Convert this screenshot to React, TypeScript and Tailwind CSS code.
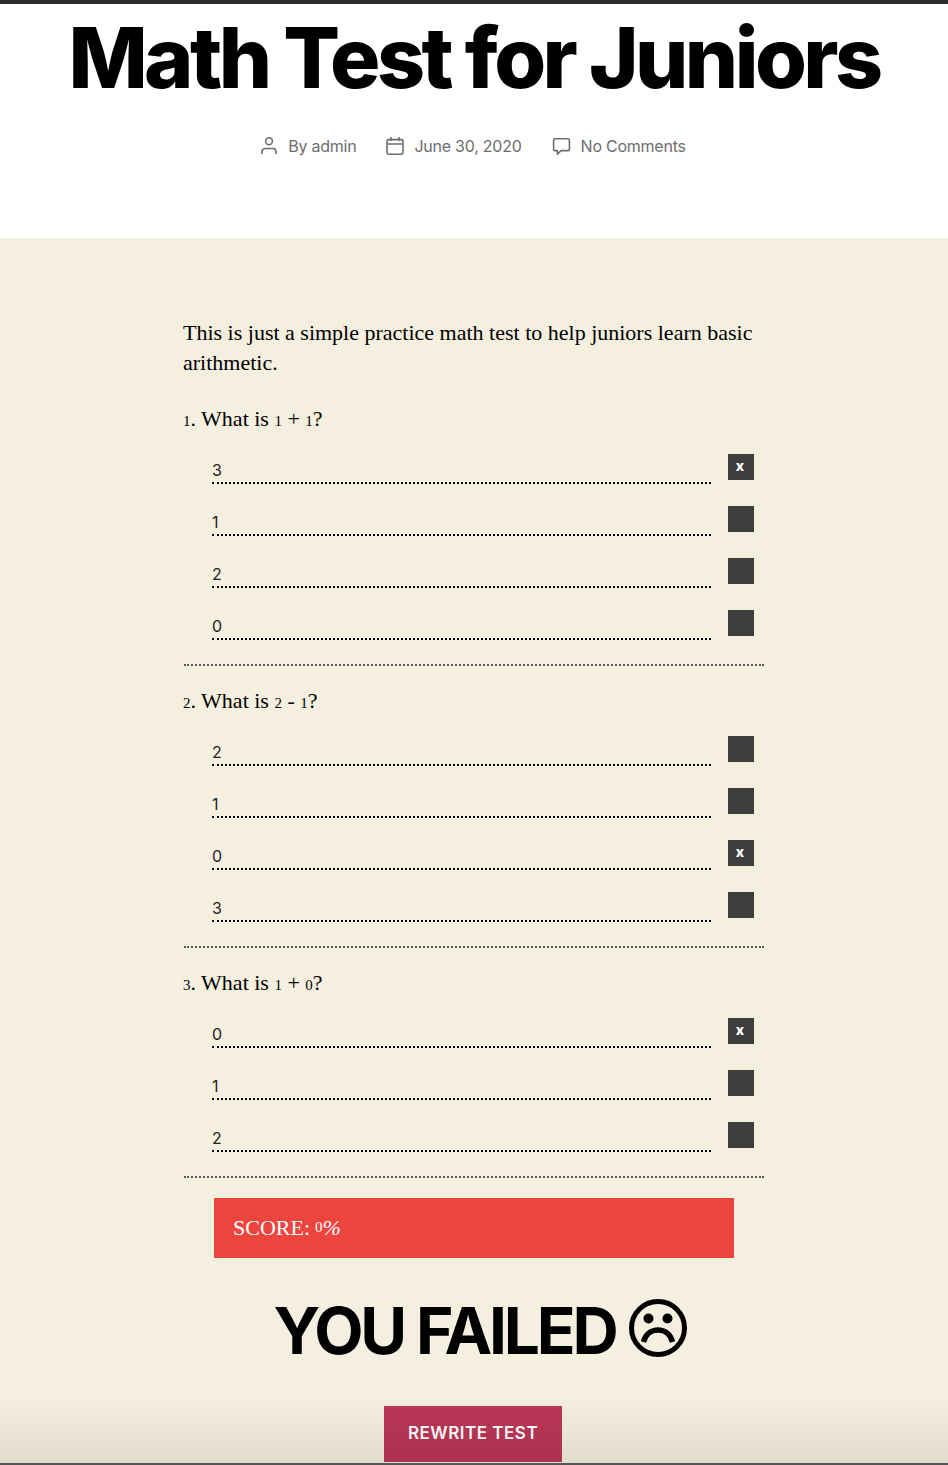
const QUESTIONS = [
  { title: ["1", ". What is ", "1", " + ", "1", "?"], answers: ["3", "1", "2", "0"], picked: 0 },
  { title: ["2", ". What is ", "2", " - ", "1", "?"], answers: ["2", "1", "0", "3"], picked: 2 },
  { title: ["3", ". What is ", "1", " + ", "0", "?"], answers: ["0", "1", "2"], picked: 0 },
];

const INTER = "font-['Inter',sans-serif]";
const SERIF = "font-['Liberation_Serif',serif]";

function UserIcon() {
  return (
    <svg viewBox="0 0 18 20" className="h-[20px] w-[18px] text-[#6d6d6d]" fill="none" stroke="currentColor" strokeWidth="1.6">
      <circle cx="9" cy="5.2" r="3.4" />
      <path d="M2 18v-2.2c0-2 1.5-3.3 3.4-3.3h7.2c1.9 0 3.4 1.3 3.4 3.3V18" />
    </svg>
  );
}

function CalendarIcon() {
  return (
    <svg viewBox="0 0 18 20" className="h-[20px] w-[18px] text-[#6d6d6d]" fill="none" stroke="currentColor" strokeWidth="1.6">
      <rect x="1" y="3.6" width="16" height="14.6" rx="1.6" />
      <path d="M1 8h16M5 1v4M13 1v4" />
    </svg>
  );
}

function CommentIcon() {
  return (
    <svg viewBox="0 0 19 19" className="h-[19px] w-[19px] text-[#6d6d6d]" fill="none" stroke="currentColor" strokeWidth="1.6">
      <path d="M3 1.8h13c.8 0 1.4.6 1.4 1.4v9c0 .8-.6 1.4-1.4 1.4H9l-3.6 3.6v-3.6H3c-.8 0-1.4-.6-1.4-1.4v-9c0-.8.6-1.4 1.4-1.4z" strokeLinejoin="round" />
    </svg>
  );
}

function SadFace() {
  return (
    <svg viewBox="0 0 60 60" className="ml-[12px] h-[60px] w-[60px]" fill="none" stroke="black">
      <circle cx="30" cy="30" r="26.5" strokeWidth="5" />
      <circle cx="20.5" cy="20.5" r="5" fill="black" stroke="none" />
      <circle cx="39.5" cy="20.5" r="5" fill="black" stroke="none" />
      <path d="M15.5 44c2-8 8-12 14.500-12s12.500 4 14.500 12" strokeWidth="5.500" />
    </svg>
  );
}

function Meta({ icon, text }: { icon: React.ReactNode; text: string }) {
  return (
    <div className="flex items-center gap-[10px]">
      {icon}
      <span>{text}</span>
    </div>
  );
}

function Answer({ text, picked }: { text: string; picked: boolean }) {
  return (
    <div className="flex h-[52px] items-start pl-[28px] pr-[10px]">
      <div className={`${INTER} mt-[5px] h-[27px] w-[499px] border-b-2 border-dotted border-black text-[16px] leading-[26px] text-[#222]`}>
        {text}
      </div>
      <div className={`${INTER} ml-[17px] mt-[2px] flex h-[26px] w-[26px] items-center justify-center bg-[#3d3d3d] pb-[4px] pr-[2px] text-[14px] font-extrabold text-white`}>
        {picked ? "x" : ""}
      </div>
    </div>
  );
}

export default function App() {
  return (
    <div className="relative h-[1465px] overflow-hidden bg-[#f5efe0]">
      <header className="h-[238px] border-t-4 border-[#2d2d2d] bg-white">
        <h1 className={`${INTER} pt-[4px] text-center text-[84px] font-extrabold leading-[100px] tracking-[-0.0425em] text-black`}>
          Math Test for Juniors
        </h1>
        <div className={`${INTER} mt-[26px] flex justify-center gap-[30px] pr-[2px] text-[16px] leading-[24px] tracking-[-0.015em] text-[#6d6d6d]`}>
          <Meta icon={<UserIcon />} text="By admin" />
          <Meta icon={<CalendarIcon />} text="June 30, 2020" />
          <Meta icon={<CommentIcon />} text="No Comments" />
        </div>
      </header>

      <main className="ml-[184px] w-[580px]">
        <p className={`${SERIF} -ml-px pt-[80px] text-[22px] leading-[30px] text-black`}>
          This is just a simple practice math test to help juniors learn basic arithmetic.
        </p>
        {QUESTIONS.map((q, i) => (
          <section key={i} className={`border-b-2 border-dotted border-[#555] pb-[4px] ${i === 0 ? "mt-[26px]" : "mt-[20px]"}`}>
            <h2 className={`${SERIF} -ml-px mb-[16px] text-[22px] font-normal leading-[30px] text-black`}>
              {q.title.map((part, k) => (
                <span key={k} className={k % 2 === 0 ? "text-[15px]" : ""}>{part}</span>
              ))}
            </h2>
            {q.answers.map((a, j) => (
              <Answer key={a} text={a} picked={j === q.picked} />
            ))}
          </section>
        ))}
        <div className={`${SERIF} ml-[30px] mt-[20px] flex h-[60px] w-[520px] items-center bg-[#ed453e] pb-[1px] pl-[19px] text-[22px] text-white`}>
          SCORE: <span className="ml-[5px] text-[15px]">0</span><span className="italic">%</span>
        </div>
        <div className={`${INTER} mt-[40px] flex h-[60px] items-center justify-center pl-[13px] text-[64px] font-bold tracking-[-0.05em] text-black`}>
          <span className="mt-[6px]">YOU FAILED</span>
          <SadFace />
        </div>
        <div className="mt-[48px] flex justify-center pr-[2px]">
          <button className={`${INTER} h-[56px] w-[178px] bg-[#bb3656] text-[17px] font-semibold tracking-[0.03em] text-white`}>
            REWRITE TEST
          </button>
        </div>
      </main>

      <div className="pointer-events-none absolute inset-x-0 bottom-0 h-[70px] border-b-2 border-[#555] bg-gradient-to-b from-transparent to-black/[0.08]" />
    </div>
  );
}
